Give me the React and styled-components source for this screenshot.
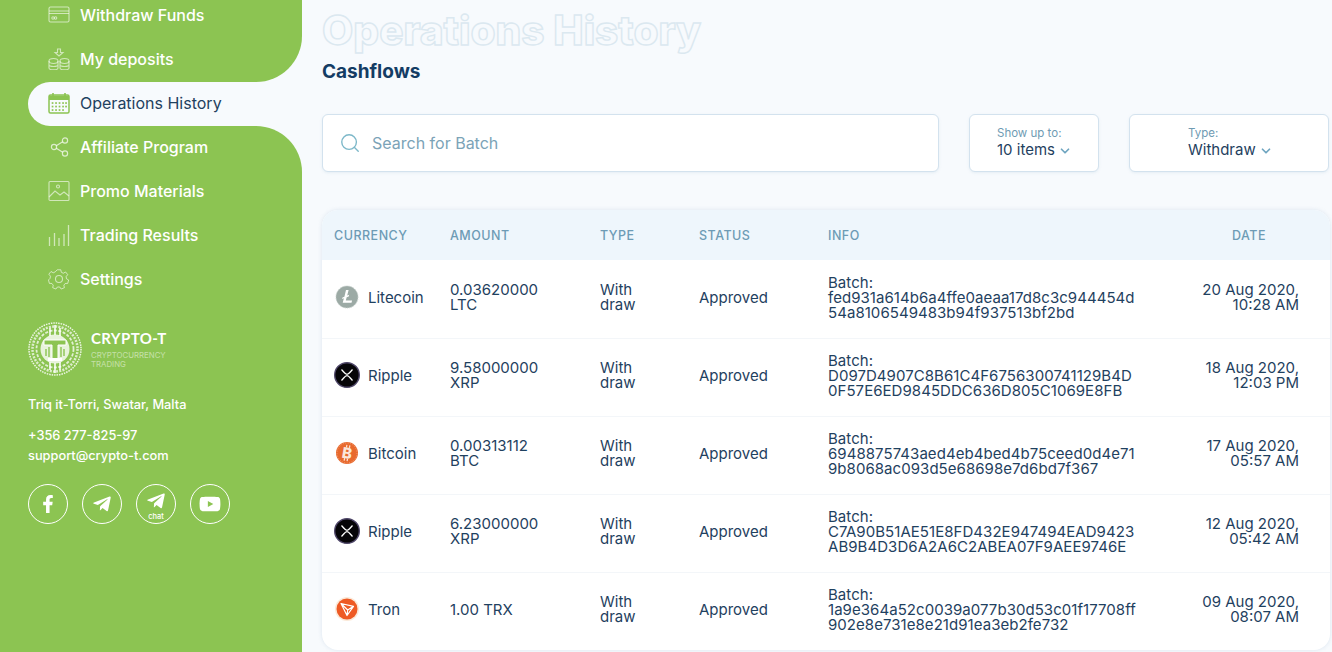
import React from 'react';
import styled, { createGlobalStyle } from 'styled-components';
import { ChevronDown, Search } from 'lucide-react';
import { FaFacebookF, FaTelegramPlane, FaYoutube } from 'react-icons/fa';

const green = '#8cc452';
const page = '#f7fafd';
const ink = '#1f4160';

const Global = createGlobalStyle`
  html, body { margin: 0; padding: 0; background: ${page}; overflow: hidden; }
  * { box-sizing: border-box; }
  body { font-family: Inter, "Liberation Sans", sans-serif; }
`;

const Shell = styled.div`
  display: flex;
  width: 1332px;
  height: 652px;
  overflow: hidden;
  background: ${page};
`;
const Sidebar = styled.aside`
  width: 302px;
  flex: none;
  display: flex;
  flex-direction: column;
  margin-top: -7px;
`;
const TopNav = styled.nav`
  background: ${green};
  border-bottom-right-radius: 46px;
  height: 89px;
`;
const ActiveWrap = styled.div`
  height: 44px;
  background: linear-gradient(to right, ${green} 50px, transparent 50px);
`;
const BottomPanel = styled.div`
  background: ${green};
  border-top-right-radius: 46px;
  flex: 1;
  display: flex;
  flex-direction: column;
`;
const NavRow = styled.a`
  display: flex;
  align-items: center;
  gap: 10px;
  height: 44px;
  padding-left: ${p => (p.$active ? '20px' : '48px')};
  padding-bottom: ${p => (p.$lift ? '2px' : '0')};
  margin-left: ${p => (p.$active ? '28px' : '0')};
  font-size: 16px;
  font-weight: ${p => (p.$active ? 400 : 500)};
  color: ${p => (p.$active ? ink : '#fff')};
  background: ${p => (p.$active ? page : 'transparent')};
  border-radius: ${p => (p.$active ? '22px 0 0 22px' : '0')};
  svg { width: 22px; height: 22px; flex: none; }
`;
const IconLine = styled.svg.attrs({ viewBox: '0 0 22 22', fill: 'none' })`
  stroke: rgba(255,255,255,.6);
  stroke-width: 1.1;
`;
const Footer = styled.div`
  padding: 20px 0 0 28px;
  color: #fff;
`;
const Brand = styled.div`
  display: flex;
  align-items: center;
  gap: 9px;
  height: 54px;
`;
const BrandText = styled.div`
  display: flex;
  flex-direction: column;
`;
const BrandName = styled.span`
  font-family: Lato, Inter, sans-serif;
  font-size: 15px;
  font-weight: 700;
  letter-spacing: .4px;
  line-height: 18px;
`;
const BrandSub = styled.span`
  font-size: 7.8px;
  line-height: 9px;
  margin-top: 4px;
  width: 84px;
  color: rgba(255,255,255,.5);
`;
const Address = styled.p`
  margin: 20px 0 13px;
  padding-top: 1px;
  font-size: 12.8px;
  line-height: 16px;
  font-weight: 500;
`;
const Contact = styled.p`
  margin: 0;
  font-size: 12.8px;
  line-height: 20px;
  font-weight: 500;
`;
const Socials = styled.div`
  display: flex;
  gap: 14px;
  margin-top: 18px;
`;
const Social = styled.a`
  position: relative;
  width: 40px;
  height: 40px;
  border: 1px solid #fff;
  border-radius: 50%;
  display: flex;
  align-items: center;
  justify-content: center;
  color: #fff;
  font-size: ${p => p.$size || 18}px;
`;
const ChatTag = styled.span`
  position: absolute;
  bottom: 2px;
  left: 0;
  right: 0;
  text-align: center;
  font-size: 7.5px;
  font-weight: 500;
  line-height: 9px;
`;
const Main = styled.main`
  flex: 1;
  padding: 0 2px 0 20px;
`;
const Title = styled.h1`
  margin: 7px 0 0;
  font-size: 40.5px;
  line-height: 48px;
  font-weight: 800;
  color: ${page};
  -webkit-text-stroke: 1.4px #dbe8f0;
  white-space: nowrap;
`;
const Subtitle = styled.h2`
  margin: 5px 0 0;
  font-size: 19px;
  line-height: 24px;
  font-weight: 700;
  color: #143c64;
`;
const Toolbar = styled.div`
  display: flex;
  margin-top: 30px;
  height: 58px;
`;
const FieldBox = styled.div`
  background: #fff;
  border: 1px solid #d3e2ee;
  border-radius: 6px;
  box-shadow: 0 1px 3px rgba(120,160,190,.14);
`;
const SearchBox = styled(FieldBox)`
  width: 617px;
  display: flex;
  align-items: center;
  gap: 11px;
  padding-left: 16px;
  font-size: 16px;
  color: #7ba3b7;
  svg { color: #7db8c9; }
`;
const SelectBox = styled(FieldBox)`
  width: ${p => p.$width}px;
  margin-left: 30px;
  padding: 11px 0 0 ${p => p.$pad}px;
`;
const SelectLabel = styled.div`
  font-size: 11.5px;
  line-height: 14px;
  color: #6f9bb3;
`;
const SelectValue = styled.div`
  display: flex;
  align-items: center;
  gap: 3px;
  margin-top: 1px;
  font-size: 15px;
  line-height: 18px;
  color: ${ink};
  svg { color: #6fa5c0; margin-top: 2px; }
`;
const Card = styled.section`
  margin-top: 38px;
  background: #fff;
  border-radius: 16px;
  box-shadow: 0 0 4px rgba(130,160,190,.22);
  overflow: hidden;
`;
const Grid = styled.div`
  display: grid;
  grid-template-columns: 116px 150px 99px 129px 371px 100px;
  padding: 0 31px 0 12px;
  align-items: center;
`;
const HeadRow = styled(Grid)`
  height: 50px;
  background: #eef6fc;
  font-size: 12.5px;
  font-weight: 500;
  letter-spacing: .5px;
  color: #6d9bb5;
`;
const HeadDate = styled.span`
  text-align: center;
`;
const Row = styled(Grid)`
  height: 78px;
  padding-bottom: 4px;
  font-size: 15px;
  line-height: 15px;
  color: ${ink};
  & + & { box-shadow: inset 0 1px 0 #f3f6f9; }
`;
const Coin = styled.div`
  display: flex;
  align-items: center;
  gap: 8px;
  svg { width: 26px; height: 26px; flex: none; }
`;
const Amount = styled.div`
  width: 100px;
`;
const TypeCell = styled.div`
  width: 37px;
  word-break: break-all;
`;
const Info = styled.div`
  width: 310px;
  word-break: break-all;
  letter-spacing: .05px;
`;
const DateCell = styled.div`
  text-align: right;
`;

const icons = {
  card: <IconLine><rect x="1" y="3" width="20" height="15" rx="1.5"/><path d="M1 7h20M1 9.5h20"/><circle cx="5" cy="14" r="1.2"/><circle cx="7.6" cy="14" r="1.2"/></IconLine>,
  dep: <IconLine><path d="M9.5 1h3v3.5H15L11 8 7 4.500h2.500z"/><ellipse cx="5.500" cy="13" rx="4.500" ry="2.500"/><path d="M1 13v7c0 1 2 1.800 4.500 1.800S10 21 10 20v-7M1 16.500c0 1 2 2 4.500 2s4.500-1 4.500-2"/><ellipse cx="16.500" cy="13" rx="4.500" ry="2.500"/><path d="M12 13v7c0 1 2 1.800 4.500 1.800S21 21 21 20v-7M12 16.500c0 1 2 2 4.500 2s4.500-1 4.500-2"/></IconLine>,
  share: <IconLine style={{stroke:'rgba(255,255,255,.7)', strokeWidth:1.2}}><circle cx="6" cy="11" r="2.600"/><circle cx="17" cy="4.500" r="2.600"/><circle cx="17" cy="17.500" r="2.600"/><path d="M8.300 9.700l6.400-3.900M8.300 12.300l6.400 3.900"/></IconLine>,
  image: <IconLine><rect x="1" y="1.500" width="20" height="19" rx="1"/><circle cx="10" cy="6.500" r="1.500"/><path d="M1 17l6-6 5 4 4-3 5 4"/></IconLine>,
  bars: <IconLine style={{strokeWidth:1.3}}><path d="M1.500 13v9M6.500 9v13M11 14v8M16 10v12M20.500 1v21"/></IconLine>,
  gear: <IconLine><circle cx="11" cy="11" r="3.500"/><path d="M9 1h4l.6 2.800 2.200 1 2.500-1.400 2.400 3-1.800 2.200.4 2.400 2.400 1.300-1 3.800-2.800.1-1.500 1.900.6 2.800-3.600 1.500-1.600-2.300h-2.600l-1.600 2.300-3.600-1.500.6-2.800-1.500-1.900-2.800-.1-1-3.800L1.100 10.500l.4-2.400L-.3 5.900l2.400-3 2.500 1.400 2.200-1z" transform="translate(1.100 .9) scale(.9)"/></IconLine>,
};

const Calendar = () => (
  <svg viewBox="0 0 22 22" fill="none">
    <rect x="1" y="3" width="20" height="18" rx="1.500" fill={page} stroke={green} strokeWidth="1.500"/>
    <path d="M1 3.500h20V8H1z" fill={green}/>
    <path d="M5 1v4M17 1v4" stroke={green} strokeWidth="1.600"/>
    {[11, 14.500, 18].map(y => [4.500, 8, 11.500, 15, 18].map(x => (y !== 18 || x < 18) && <rect key={`${x}${y}`} x={x - .8} y={y - .8} width="1.700" height="1.700" fill={green}/>))}
  </svg>
);

const Litecoin = () => (
  <svg viewBox="0 0 26 26">
    <circle cx="13" cy="13" r="11" fill="#9caaa5"/>
    <circle cx="13" cy="13" r="11" fill="none" stroke="#c5cfcb" strokeWidth="1" strokeDasharray="1 1"/>
    <path d="M12 6h2.600l-1.400 5.600 2-.8-.5 1.600-2 .8-.9 3.400h6.300l-.6 2.200H8.700l1.200-4.500-1.900.7.500-1.600 1.900-.7z" fill="#fff"/>
  </svg>
);
const Ripple = () => (
  <svg viewBox="0 0 26 26">
    <circle cx="13" cy="13" r="12.300" fill="#060508" stroke="#4e4668" strokeWidth="1.400"/>
    <path d="M7.500 7.500C10 10 11 12.300 13 12.300S16 10 18.500 7.500M7.500 18.500C10 16 11 13.700 13 13.700S16 16 18.500 18.500" fill="none" stroke="#fff" strokeWidth="1.300"/>
  </svg>
);
const Bitcoin = () => (
  <svg viewBox="0 0 26 26">
    <circle cx="13" cy="13" r="11" fill="#e8692d"/>
    <circle cx="13" cy="13" r="10" fill="none" stroke="#f3a27c" strokeWidth="1" strokeDasharray="1 1.500"/>
    <text x="13" y="18.500" textAnchor="middle" fontFamily="Inter, sans-serif" fontWeight="800" fontSize="15" fill="#fbe6da" transform="rotate(10 13 13)">B</text>
    <path d="M11.500 5v2.500M14.500 5v2.500M11.500 18.500v2.500M14.500 18.500v2.500" stroke="#fbe6da" strokeWidth="1.200" transform="rotate(10 13 13)"/>
  </svg>
);
const Tron = () => (
  <svg viewBox="0 0 26 26">
    <circle cx="13" cy="13" r="12" fill="#fbe9d8"/>
    <circle cx="13" cy="13" r="10.500" fill="#ee5a24"/>
    <path d="M7 7.500l12.500 2.800-6.500 9.200zM7 7.500l6.700 6.500 5.800-3.700M13.700 14l-.7 5.500" fill="none" stroke="#fff" strokeWidth="1.200" strokeLinejoin="round"/>
  </svg>
);

const Logo = () => (
  <svg width="54" height="54" viewBox="0 0 54 54" fill="none" stroke="#fff">
    <circle cx="27" cy="27" r="26" strokeWidth="1.500" strokeDasharray="1.500 1" opacity=".85"/>
    <circle cx="27" cy="27" r="22.500" strokeWidth="2.500" strokeDasharray="2 1.200" opacity=".7"/>
    <circle cx="27" cy="27" r="18.500" strokeWidth="1.800" strokeDasharray="3 1.500" opacity=".75"/>
    <circle cx="27" cy="27" r="14.500" fill="#fff" fillOpacity=".8" stroke="none"/>
    <path d="M27 3v10M27 41v10M22 6v8M32 6v8M22 40v8M32 40v8" strokeWidth="1.500"/>
    <path d="M16 18h22v5H30v15h-6V23h-8z" fill={green} stroke="#fff" strokeWidth="1"/>
    <path d="M18 27v7M21 25v10M33 25v10M36 27v7" stroke={green} strokeWidth="1.400"/>
    <path d="M20 36h14v3H20z" fill="#fff" stroke="none"/>
  </svg>
);

const rows = [
  { Icon: Litecoin, coin: 'Litecoin', amount: '0.03620000 LTC', hash: 'fed931a614b6a4ffe0aeaa17d8c3c944454d54a8106549483b94f937513bf2bd', date: ['20 Aug 2020,', '10:28 AM'] },
  { Icon: Ripple, coin: 'Ripple', amount: '9.58000000 XRP', hash: 'D097D4907C8B61C4F6756300741129B4D0F57E6ED9845DDC636D805C1069E8FB', date: ['18 Aug 2020,', '12:03 PM'] },
  { Icon: Bitcoin, coin: 'Bitcoin', amount: '0.00313112 BTC', hash: '6948875743aed4eb4bed4b75ceed0d4e719b8068ac093d5e68698e7d6bd7f367', date: ['17 Aug 2020,', '05:57 AM'] },
  { Icon: Ripple, coin: 'Ripple', amount: '6.23000000 XRP', hash: 'C7A90B51AE51E8FD432E947494EAD9423AB9B4D3D6A2A6C2ABEA07F9AEE9746E', date: ['12 Aug 2020,', '05:42 AM'] },
  { Icon: Tron, coin: 'Tron', amount: '1.00 TRX', hash: '1a9e364a52c0039a077b30d53c01f17708ff902e8e731e8e21d91ea3eb2fe732', date: ['09 Aug 2020,', '08:07 AM'] },
];

export default function App() {
  return (
    <Shell>
      <Global />
      <Sidebar>
        <TopNav>
          <NavRow>{icons.card}Withdraw Funds</NavRow>
          <NavRow>{icons.dep}My deposits</NavRow>
        </TopNav>
        <ActiveWrap>
          <NavRow $active $lift><Calendar />Operations History</NavRow>
        </ActiveWrap>
        <BottomPanel>
          <NavRow $lift>{icons.share}Affiliate Program</NavRow>
          <NavRow $lift>{icons.image}Promo Materials</NavRow>
          <NavRow $lift>{icons.bars}Trading Results</NavRow>
          <NavRow $lift>{icons.gear}Settings</NavRow>
          <Footer>
            <Brand>
              <Logo />
              <BrandText>
                <BrandName>CRYPTO-T</BrandName>
                <BrandSub>CRYPTOCURRENCY TRADING</BrandSub>
              </BrandText>
            </Brand>
            <Address>Triq it-Torri, Swatar, Malta</Address>
            <Contact>+356 277-825-97</Contact>
            <Contact>support@crypto-t.com</Contact>
            <Socials>
              <Social><FaFacebookF /></Social>
              <Social $size={20}><FaTelegramPlane /></Social>
              <Social $size={20}><FaTelegramPlane style={{ marginTop: -6 }} /><ChatTag>chat</ChatTag></Social>
              <Social $size={22}><FaYoutube /></Social>
            </Socials>
          </Footer>
        </BottomPanel>
      </Sidebar>
      <Main>
        <Title>Operations History</Title>
        <Subtitle>Cashflows</Subtitle>
        <Toolbar>
          <SearchBox><Search size={22} strokeWidth={1.5} />Search for Batch</SearchBox>
          <SelectBox $width={130} $pad={27}>
            <SelectLabel>Show up to:</SelectLabel>
            <SelectValue>10 items <ChevronDown size={14} strokeWidth={3} /></SelectValue>
          </SelectBox>
          <SelectBox $width={200} $pad={58}>
            <SelectLabel>Type:</SelectLabel>
            <SelectValue>Withdraw <ChevronDown size={14} strokeWidth={3} /></SelectValue>
          </SelectBox>
        </Toolbar>
        <Card>
          <HeadRow>
            <span>CURRENCY</span><span>AMOUNT</span><span>TYPE</span><span>STATUS</span><span>INFO</span><HeadDate>DATE</HeadDate>
          </HeadRow>
          {rows.map(r => (
            <Row key={r.hash}>
              <Coin><r.Icon />{r.coin}</Coin>
              <Amount>{r.amount}</Amount>
              <TypeCell>Withdraw</TypeCell>
              <span>Approved</span>
              <Info>Batch:<br />{r.hash}</Info>
              <DateCell>{r.date[0]}<br />{r.date[1]}</DateCell>
            </Row>
          ))}
        </Card>
      </Main>
    </Shell>
  );
}
